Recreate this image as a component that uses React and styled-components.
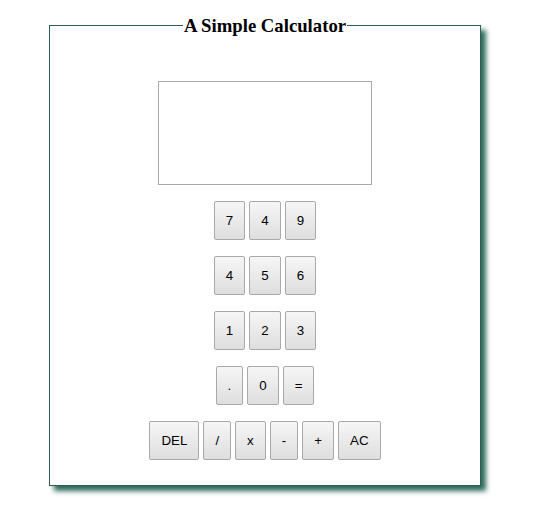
import React from "react";
import styled, { createGlobalStyle } from "styled-components";

const rows = [
  ["7", "4", "9"],
  ["4", "5", "6"],
  ["1", "2", "3"],
  [".", "0", "="],
  ["DEL", "/", "x", "-", "+", "AC"],
];

const App = () => {
  return (
    <>
      <GlobalStyle />
      <Frame>
        <Legend>A Simple Calculator</Legend>
        <Body>
          <Screen />
          <Keys>
            {rows.map((row, i) => (
              <Row key={i}>
                {row.map((key, j) => (
                  <Key key={j}>{key}</Key>
                ))}
              </Row>
            ))}
          </Keys>
        </Body>
      </Frame>
    </>
  );
};

const GlobalStyle = createGlobalStyle`
  body {
    margin: 0;
    min-height: 100vh;
    background: #fff;
  }
`;

const Frame = styled.fieldset`
  width: 432px;
  box-sizing: border-box;
  margin: 15px 0 30px 49px;
  padding: 0 0 25px 0;
  border: 1px solid #2d5e4e;
  box-shadow: 5px 5px 5px #2f6a5a;
`;

const Legend = styled.legend`
  margin: 0 auto;
  padding: 0 1px;
  font-family: "Liberation Serif", serif;
  font-weight: bold;
  font-size: 18.72px;
  line-height: 21px;
  color: #000;
`;

const Body = styled.div`
  display: flex;
  flex-direction: column;
  align-items: center;
`;

const Screen = styled.div`
  width: 214px;
  height: 104px;
  box-sizing: border-box;
  margin-top: 45px;
  border: 1px solid #aaa;
  background: #fff;
`;

const Keys = styled.div`
  margin-top: 16px;
  display: flex;
  flex-direction: column;
  align-items: center;
  gap: 16px;
`;

const Row = styled.div`
  display: flex;
  justify-content: center;
  gap: 4px;
`;

const Key = styled.button`
  height: 39px;
  padding: 0 11px;
  border: 1px solid #a9a9a9;
  border-radius: 2px;
  background: linear-gradient(#f6f6f6, #dedede);
  font-family: "Liberation Sans", Arial, sans-serif;
  font-size: 13.33px;
  color: #000;
  cursor: pointer;
`;

export default App;
